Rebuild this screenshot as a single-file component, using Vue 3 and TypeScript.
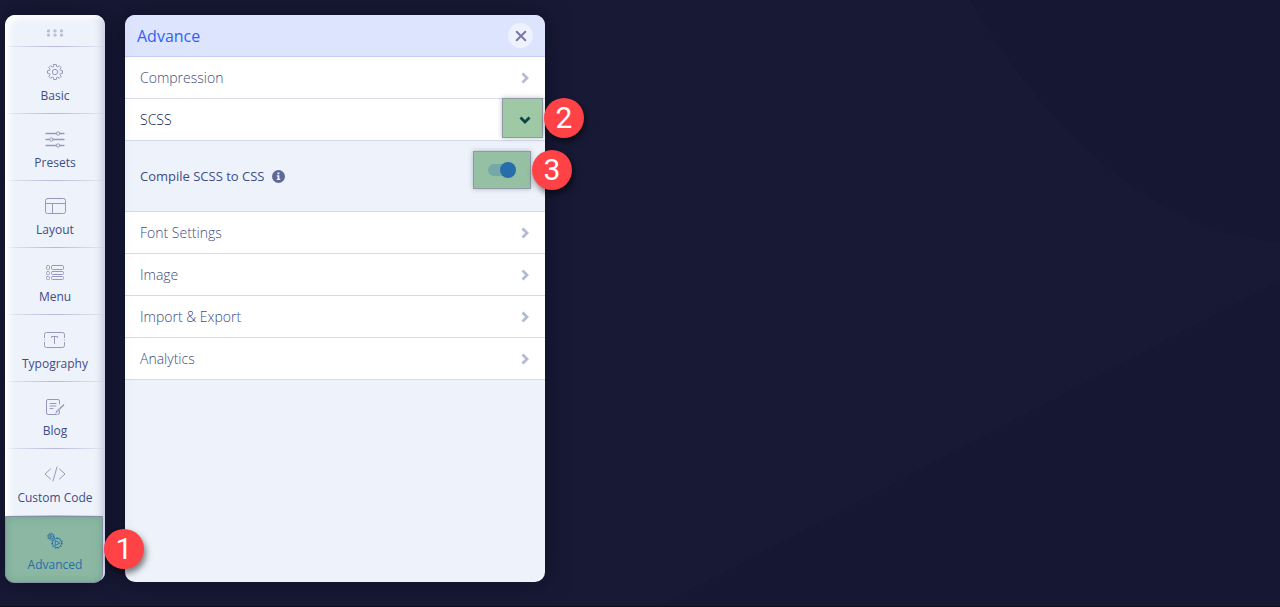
<script setup lang="ts">
import { ref } from 'vue'

interface NavItem {
  id: string
  label: string
}

interface Section {
  id: string
  label: string
}

const navItems: NavItem[] = [
  { id: 'basic', label: 'Basic' },
  { id: 'presets', label: 'Presets' },
  { id: 'layout', label: 'Layout' },
  { id: 'menu', label: 'Menu' },
  { id: 'typography', label: 'Typography' },
  { id: 'blog', label: 'Blog' },
  { id: 'code', label: 'Custom Code' },
  { id: 'advanced', label: 'Advanced' },
]

const sections: Section[] = [
  { id: 'compression', label: 'Compression' },
  { id: 'scss', label: 'SCSS' },
  { id: 'fonts', label: 'Font Settings' },
  { id: 'image', label: 'Image' },
  { id: 'transfer', label: 'Import & Export' },
  { id: 'analytics', label: 'Analytics' },
]

const activeNav = ref('advanced')
const openSection = ref('scss')
const compileScss = ref(true)
const panelOpen = ref(true)

function selectNav(id: string): void {
  activeNav.value = id
  panelOpen.value = true
}

function toggleSection(id: string): void {
  openSection.value = openSection.value === id ? '' : id
}
</script>

<template>
  <div class="page">
    <svg class="backdrop" viewBox="0 0 1280 607" preserveAspectRatio="none" aria-hidden="true">
      <path d="M970 0C1040 120 1150 235 1280 242V0Z" fill="#161732" />
      <path d="M660 607L1280 281V607Z" fill="#161732" />
    </svg>

    <nav class="sidebar" aria-label="Template options">
      <div class="handle">
        <svg width="18" height="8" viewBox="0 0 18 8" fill="#b9bdd6" aria-hidden="true">
          <circle cx="2.500" cy="1.900" r="1.700" /><circle cx="9" cy="1.900" r="1.700" /><circle cx="15.500" cy="1.900" r="1.700" />
          <circle cx="2.500" cy="6.100" r="1.700" /><circle cx="9" cy="6.100" r="1.700" /><circle cx="15.500" cy="6.100" r="1.700" />
        </svg>
      </div>
      <div v-for="item in navItems" :key="item.id" class="nav-cell">
        <button
          type="button"
          class="nav-item"
          :class="{ active: activeNav === item.id }"
          :aria-pressed="activeNav === item.id"
          @click="selectNav(item.id)"
        >
          <svg class="nav-icon" viewBox="0 0 24 20" fill="none" stroke="currentColor" stroke-linecap="round" stroke-linejoin="round" aria-hidden="true">
            <template v-if="item.id === 'basic'">
              <path d="M10.700 2.500h2.600l.2 2 1.200.5 1.600-1.300 1.900 1.900-1.300 1.600.5 1.200 2.100.3v2.600l-2.100.3-.5 1.200 1.300 1.600-1.900 1.900-1.600-1.300-1.200.5-.2 2h-2.600l-.2-2-1.200-.5-1.600 1.300-1.900-1.900 1.300-1.600-.5-1.200-2.100-.3V8.700l2.100-.3.5-1.200-1.300-1.600 1.900-1.900 1.600 1.300 1.200-.5z" />
              <circle cx="12" cy="10" r="2.700" />
            </template>
            <template v-else-if="item.id === 'presets'">
              <path stroke-width="1.300" d="M3 4.500h10.500M17 4.500h4M3 10.500h3.500M10.200 10.500H21M3 16.500h10.500M17 16.500h4" />
              <circle cx="15.200" cy="4.500" r="1.700" /><circle cx="8.400" cy="10.500" r="1.700" /><circle cx="15.200" cy="16.500" r="1.700" />
            </template>
            <template v-else-if="item.id === 'layout'">
              <rect x="2.500" y="2.500" width="20" height="15" rx="2" />
              <path d="M2.500 7.500h20M9.500 7.500v10" />
            </template>
            <template v-else-if="item.id === 'menu'">
              <rect x="3.500" y="2.500" width="3" height="4" rx="1" /><rect x="8.500" y="2.500" width="12" height="4" rx="1" />
              <rect x="3.500" y="8.500" width="3" height="3" rx="1" /><rect x="8.500" y="8.500" width="12" height="3" rx="1" />
              <rect x="3.500" y="13.500" width="3" height="3" rx="1" /><rect x="8.500" y="13.500" width="12" height="3" rx="1" />
            </template>
            <template v-else-if="item.id === 'typography'">
              <path d="M1.500 7.500v-3a2 2 0 0 1 2-2h16a2 2 0 0 1 2 2v3M21.500 12.500v3a2 2 0 0 1-2 2h-16a2 2 0 0 1-2-2v-3M1.500 10h.1M21.500 10h.1" />
              <path d="M8.500 7.500V6.500h6v1M11.500 6.500v7" />
            </template>
            <template v-else-if="item.id === 'blog'">
              <path d="M16.500 7V4a1.500 1.500 0 0 0-1.500-1.500H5A1.500 1.500 0 0 0 3.500 4v12A1.500 1.500 0 0 0 5 17.500h8.500M16.500 14v2a1.500 1.500 0 0 1-1.500 1.500M7 6.500h6M7 9h6M7 11.500h3M13 16l.8-2.300 7-6.200M14 15.500l6.800-7.200" />
            </template>
            <template v-else-if="item.id === 'code'">
              <path d="M7.500 5L2 10l5.500 5M16.500 5L22 10l-5.500 5M14 3l-4 14" />
            </template>
            <template v-else>
              <circle cx="8" cy="5.500" r="2.600" />
              <circle cx="8" cy="5.500" r="3.500" stroke-dasharray="1.200 1.500" stroke-linecap="butt" />
              <path d="M7.400 4.500L9.100 5.500 7.400 6.500z" />
              <circle cx="14" cy="12" r="4.600" />
              <circle cx="14" cy="12" r="5.500" stroke-dasharray="1.400 1.700" stroke-linecap="butt" />
              <path d="M12.500 9.500L16.800 12 12.500 14.500z" />
            </template>
          </svg>
          <span>{{ item.label }}</span>
        </button>
        <span v-if="item.id === 'advanced'" class="step step-nav">1</span>
      </div>
    </nav>

    <main v-if="panelOpen" class="panel">
      <header class="panel-head">
        <h1>Advance</h1>
        <button type="button" class="close" aria-label="Close" @click="panelOpen = false">
          <svg width="12" height="12" viewBox="0 0 12 12" stroke="currentColor" stroke-width="2" stroke-linecap="round" aria-hidden="true">
            <path d="M1.700 1.700l8.600 8.600M10.300 1.700L1.700 10.300" />
          </svg>
        </button>
      </header>

      <section v-for="section in sections" :key="section.id" class="section">
        <h2>
          <button
            type="button"
            class="row"
            :class="{ open: openSection === section.id }"
            :aria-expanded="openSection === section.id"
            @click="toggleSection(section.id)"
          >
            <span>{{ section.label }}</span>
            <span v-if="section.id === 'scss'" class="mark mark-row"></span>
            <svg class="chevron" width="12" height="12" viewBox="0 0 12 12" fill="none" stroke="currentColor" stroke-width="2.800" aria-hidden="true">
              <path d="M3.500 1.500L8 6l-4.500 4.500" />
            </svg>
          </button>
        </h2>
        <span v-if="section.id === 'scss'" class="step step-row">2</span>
        <div v-if="section.id === 'scss' && openSection === 'scss'" class="setting">
          <label for="compile-scss">Compile SCSS to CSS</label>
          <svg class="info" width="13" height="13" viewBox="0 0 13 13" aria-hidden="true">
            <circle cx="6.500" cy="6.500" r="6.500" fill="#5f6997" />
            <path d="M5.400 2.500h2v1.800h-2zM4.800 5.300h2.600v3.500h.8V10H4.800V8.800h.8V6.400h-.8z" fill="#eef3fb" />
          </svg>
          <div class="switch-box">
            <input id="compile-scss" v-model="compileScss" class="switch" type="checkbox" role="switch" />
            <span class="step step-switch">3</span>
          </div>
        </div>
      </section>
    </main>
  </div>
</template>

<style>
html,
body {
  background: #181935;
}
</style>

<style scoped>
.page {
  box-sizing: border-box;
  position: relative;
  display: flex;
  align-items: stretch;
  gap: 20px;
  min-height: 100vh;
  padding: 15px 5px 24px;
  border-bottom: 1px solid #0d0e22;
  background: #181935;
  font-family: "Open Sans", "Noto Sans", sans-serif;
}

.backdrop {
  position: absolute;
  inset: 0;
  width: 100%;
  height: 100%;
}

button {
  margin: 0;
  padding: 0;
  border: 0;
  background: none;
  font: inherit;
  color: inherit;
  cursor: pointer;
}

.sidebar {
  position: relative;
  z-index: 1;
  flex: 0 0 100px;
  align-self: flex-start;
  border-radius: 10px;
  background: #eef3fb;
  box-shadow: 0 0 24px rgba(6, 6, 24, 0.5);
}

.sidebar::after {
  content: "";
  position: absolute;
  inset: 0;
  border-radius: 10px;
  box-shadow: inset 6px 5px 6px -2px #fff, inset -7px 0 7px -3px #c9cfe2;
  pointer-events: none;
}

.handle {
  display: flex;
  align-items: center;
  justify-content: center;
  height: 31px;
  padding-top: 4px;
  box-sizing: border-box;
}

.nav-cell {
  position: relative;
}

.nav-cell::before {
  content: "";
  display: block;
  height: 1px;
  background: linear-gradient(90deg, #e6eaf5, #b4bad6 50%, #e6eaf5);
}

.nav-item {
  display: flex;
  flex-direction: column;
  align-items: center;
  gap: 5px;
  width: 100%;
  height: 66px;
  padding-top: 15px;
  box-sizing: border-box;
  color: #414b85;
  font-size: 12px;
  line-height: 18px;
  white-space: nowrap;
}

.nav-icon {
  width: 24px;
  height: 20px;
  color: #9698bd;
}

.nav-item.active {
  position: relative;
  z-index: 1;
  width: 98px;
  height: 67px;
  margin-bottom: -1px;
  padding: 14px 0 0 2px;
  border: 1px solid #858fa8;
  border-radius: 0 0 9px 9px;
  background: #8cb8a3;
  box-shadow: inset 0 0 8px rgba(70, 130, 110, 0.35);
  color: #266da9;
}

.nav-item.active .nav-icon {
  color: #2c73ab;
}

.step {
  position: absolute;
  z-index: 3;
  width: 40px;
  height: 40px;
  border-radius: 50%;
  background: #ff4245;
  box-shadow: 2px 4px 6px rgba(0, 0, 0, 0.5);
  color: #fff;
  font-family: Roboto, Arial, sans-serif;
  font-size: 30px;
  line-height: 40px;
  text-align: center;
}

.step-nav {
  top: 14px;
  right: -39px;
}

.step-row {
  top: -1px;
  right: -39px;
}

.step-switch {
  top: -2px;
  right: -42px;
}

.panel {
  position: relative;
  flex: 0 1 420px;
  min-width: 0;
  border-radius: 10px;
  background: #eef3fb;
  box-shadow: 0 0 24px rgba(6, 6, 24, 0.5);
}

.panel-head {
  display: flex;
  align-items: center;
  justify-content: space-between;
  height: 41px;
  padding: 0 12px;
  border-bottom: 1px solid #bfcff8;
  border-radius: 10px 10px 0 0;
  background: #dde4fd;
}

h1,
h2 {
  margin: 0;
  font-weight: 400;
}

h1 {
  color: #2f62f5;
  font-size: 16px;
  line-height: 24px;
}

.close {
  display: flex;
  align-items: center;
  justify-content: center;
  width: 25px;
  height: 25px;
  border-radius: 50%;
  background: #eef2fd;
  color: #7479a8;
}

.section {
  position: relative;
}

.row {
  position: relative;
  display: flex;
  align-items: center;
  justify-content: space-between;
  width: 100%;
  height: 42px;
  padding: 0 14px 0 15px;
  box-sizing: border-box;
  border-bottom: 1px solid #d6daea;
  background: #fff;
  color: #414c80;
  font-size: 14px;
  font-weight: 300;
  line-height: 20px;
}

.row.open {
  color: #0c1650;
}

.chevron {
  position: relative;
  color: #b4bad0;
}

.open .chevron {
  color: #0a4547;
  transform: rotate(90deg);
}

.mark,
.switch-box {
  box-sizing: border-box;
  border: 1px solid #8f9aa5;
  background: #9fc8a5;
  box-shadow: 0 0 5px rgba(30, 40, 60, 0.3);
}

.mark-row {
  position: absolute;
  top: -1px;
  right: 2px;
  width: 41px;
  height: 40px;
}

.setting {
  display: flex;
  align-items: center;
  height: 71px;
  padding: 0 14px 0 15px;
  box-sizing: border-box;
  border-bottom: 1px solid #d6daea;
  color: #414b85;
  font-size: 13px;
  line-height: 20px;
}

.info {
  margin-left: 8px;
}

.switch-box {
  position: relative;
  display: flex;
  align-items: center;
  justify-content: center;
  width: 58px;
  height: 38px;
  margin: 0 0 12px auto;
  background: #96c0a3;
}

.switch {
  appearance: none;
  display: flex;
  align-items: center;
  width: 28px;
  height: 12px;
  margin: 0;
  border-radius: 6px;
  background: #76a8a7;
  cursor: pointer;
}

.switch::before {
  content: "";
  width: 16px;
  height: 16px;
  border-radius: 50%;
  background: #f4f7fc;
}

.switch:checked {
  justify-content: flex-end;
}

.switch:checked::before {
  background: #266da9;
}
</style>
